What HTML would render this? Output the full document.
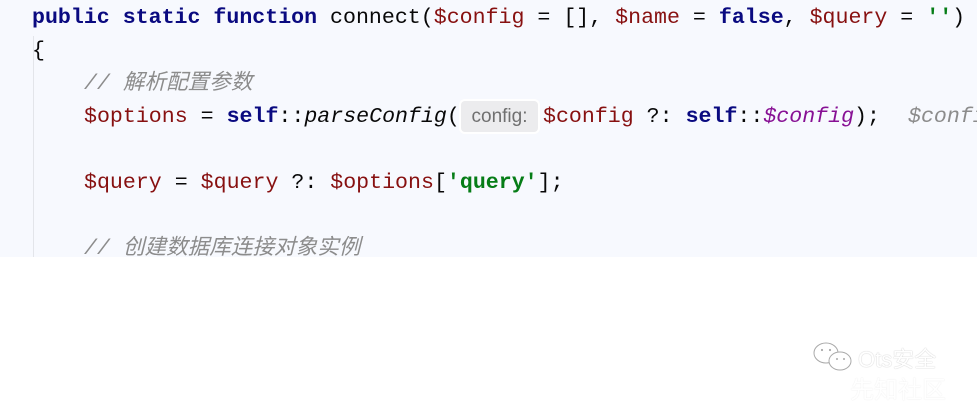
<!DOCTYPE html>
<html><head><meta charset="utf-8"><style>
html,body{margin:0;padding:0;width:977px;height:402px;background:#fff;overflow:hidden}
#code{position:absolute;left:0;top:0;width:977px;height:257px;background:#f7f9fe;overflow:hidden}
.l{position:absolute;white-space:pre;font-family:"Liberation Mono","Noto Sans CJK SC",monospace;font-size:21.6px;line-height:33px;height:33px;color:#080808}
.k{color:#0a0a80;font-weight:bold}
.v{color:#871010}
.c{color:#8c8c8c;font-style:italic}
.s{color:#067d17;font-weight:bold}
.sv{color:#871094;font-style:italic}
.f{font-style:italic}
.g{color:#8c8c8c;font-style:italic}
.hint{position:absolute;left:461px;top:101px;width:77px;height:31px;background:#ececee;border-radius:4px;box-shadow:0 0 0 2px #fff;font-family:"Liberation Sans",sans-serif;font-size:19px;color:#707070;line-height:31px;text-align:center}
.guide{position:absolute;left:33px;top:36px;width:1px;height:221px;background:#e3e5ea}
.wm{position:absolute;font-family:"Liberation Sans","Noto Sans CJK SC",sans-serif;color:#fff;text-shadow:0 0 1px #aaa}
</style></head><body>
<div id="code">
<div class="guide"></div>
<div class="l" style="left:32px;top:2px"><span class="k">public static function</span> connect(<span class="v">$config</span> = [], <span class="v">$name</span> = <span class="k">false</span>, <span class="v">$query</span> = <span class="s">''</span>)</div>
<div class="l" style="left:32px;top:35px">{</div>
<div class="l c" style="left:84px;top:68px">// 解析配置参数</div>
<div class="l" style="left:84px;top:101px"><span class="v">$options</span> = <span class="k">self</span>::<span class="f">parseConfig</span>(</div>
<div class="hint">config:</div>
<div class="l" style="left:543px;top:101px"><span class="v">$config</span> ?: <span class="k">self</span>::<span class="sv">$config</span>);</div>
<div class="l g" style="left:908px;top:101px">$config</div>
<div class="l" style="left:84px;top:167px"><span class="v">$query</span> = <span class="v">$query</span> ?: <span class="v">$options</span>[<span class="s">'query'</span>];</div>
<div class="l c" style="left:84px;top:233px">// 创建数据库连接对象实例</div>
</div>
<svg style="position:absolute;left:812px;top:340px" width="44" height="36" viewBox="0 0 44 36"><ellipse cx="14" cy="13" rx="12" ry="10" fill="#fff" stroke="#aaa" stroke-width="1"/><ellipse cx="28" cy="21" rx="11" ry="9" fill="#fff" stroke="#aaa" stroke-width="1"/><circle cx="10" cy="10" r="1.1" fill="#aaa"/><circle cx="18" cy="10" r="1.1" fill="#aaa"/><circle cx="25" cy="19" r="1" fill="#aaa"/><circle cx="32" cy="19" r="1" fill="#aaa"/></svg>
<div class="wm" style="left:858px;top:342px;font-size:22px">Ots安全</div>
<div class="wm" style="left:850px;top:370px;font-size:24px;opacity:.35">先知社区</div>
</body></html>
